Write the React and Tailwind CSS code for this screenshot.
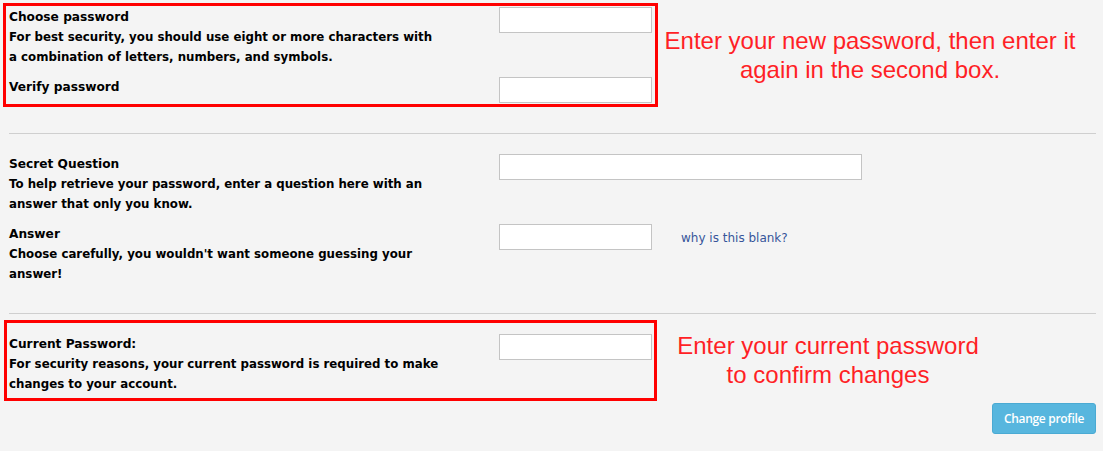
export default function App() {
  const label = "text-[12.2px] leading-[20px] font-bold text-black";
  const desc = "text-[11.8px] leading-[20px] font-bold text-black";
  const input = "h-[26px] bg-white border border-[#c4c4c4] block";
  const note = "text-[24px] leading-[29px] text-[#ff1f26] text-center";
  return (
    <div
      className="w-full h-[451px] bg-[#f4f4f4] overflow-hidden"
      style={{ fontFamily: '"DejaVu Sans", Verdana, sans-serif' }}
    >
      {/* Section 1 */}
      <div className="flex items-start pt-[3px] pl-[3px]">
        <div className="w-[655px] border-[3px] border-[#ff0000] pl-[3px] pt-[1px] pb-[1px] flex flex-col gap-[10px]">
          <div className="flex">
            <div className="w-[490px]">
              <div className={label}>Choose password</div>
              <div className={desc}>
                For best security, you should use eight or more characters with
                <br />a combination of letters, numbers, and symbols.
              </div>
            </div>
            <div className={`${input} w-[153px]`} />
          </div>
          <div className="flex">
            <div className="w-[490px]">
              <div className={label}>Verify password</div>
            </div>
            <div className={`${input} w-[153px]`} />
          </div>
        </div>
        <div
          className={`${note} w-[424px] pt-[23px]`}
          style={{ fontFamily: '"Liberation Sans", Arial, sans-serif' }}
        >
          Enter your new password, then enter it
          <br />
          again in the second box.
        </div>
      </div>

      <div className="mx-[9px] mr-[7px] mt-[26px] h-px bg-[#cfcfcf]" />

      {/* Section 2 */}
      <div className="pl-[9px] pt-[20px] flex flex-col gap-[10px]">
        <div className="flex">
          <div className="w-[490px]">
            <div className={label}>Secret Question</div>
            <div className={desc}>
              To help retrieve your password, enter a question here with an
              <br />
              answer that only you know.
            </div>
          </div>
          <div className={`${input} w-[363px]`} />
        </div>
        <div className="flex">
          <div className="w-[490px]">
            <div className={label}>Answer</div>
            <div className={desc}>
              Choose carefully, you wouldn't want someone guessing your
              <br />
              answer!
            </div>
          </div>
          <div className={`${input} w-[153px]`} />
          <div className="ml-[29px] pt-[4px] text-[12px] leading-[20px] text-[#36559a]">
            why is this blank?
          </div>
        </div>
      </div>

      <div className="ml-[9px] mr-[7px] mt-[29px] h-px bg-[#cfcfcf]" />

      {/* Section 3 */}
      <div className="flex items-start pt-[6px] pl-[4px]">
        <div className="w-[653px] border-[3px] border-[#ff0000] pl-[2px] pt-[11px] pb-[4px] flex">
          <div className="w-[490px]">
            <div className={label}>Current Password:</div>
            <div className={desc}>
              For security reasons, your current password is required to make
              <br />
              changes to your account.
            </div>
          </div>
          <div className={`${input} w-[153px]`} />
        </div>
        <div
          className={`${note} w-[342px] pt-[11px]`}
          style={{ fontFamily: '"Liberation Sans", Arial, sans-serif' }}
        >
          Enter your current password
          <br />
          to confirm changes
        </div>
      </div>

      <div className="flex justify-end pr-[7px] pt-[2px]">
        <button
          className="w-[104px] h-[31px] rounded-[3px] bg-[#57b6de] border border-[#4aaad3] text-white text-[12px] font-semibold tracking-[-0.3px]"
          style={{ fontFamily: '"Open Sans", sans-serif' }}
        >
          Change profile
        </button>
      </div>
    </div>
  );
}
